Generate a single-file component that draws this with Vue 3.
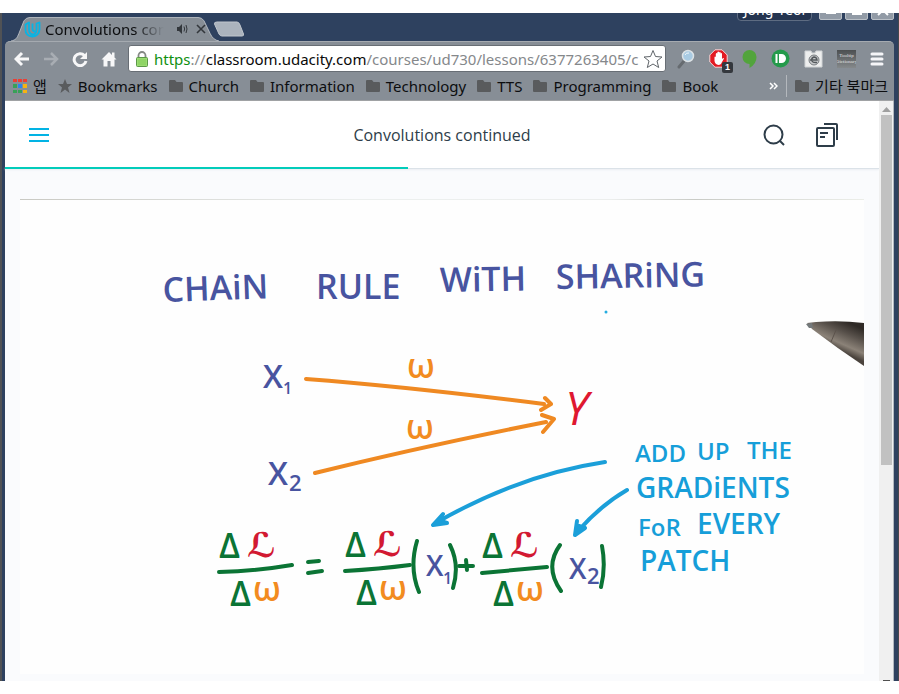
<script setup>
import { ref } from 'vue'

const address = ref('')
const progress = 46.1
const bookmarks = ['Church', 'Information', 'Technology', 'TTS', 'Programming', 'Book']

const titleWords = [
  { t: 'CHAiN', x: 163, y: 302, r: -2 },
  { t: 'RULE', x: 316, y: 299, r: 0 },
  { t: 'WiTH', x: 440, y: 292, r: -1 },
  { t: 'SHARiNG', x: 556, y: 289, r: -1 },
]
const noteWords = [
  { t: 'ADD', x: 635, y: 462, c: 'note' },
  { t: 'UP', x: 697, y: 460, c: 'note' },
  { t: 'THE', x: 747, y: 459, c: 'note' },
  { t: 'GRADiENTS', x: 636, y: 498, c: 'note wide' },
  { t: 'FoR', x: 638, y: 536, c: 'note' },
  { t: 'EVERY', x: 697, y: 534, c: 'note wide' },
  { t: 'PATCH', x: 640, y: 571, c: 'note wide' },
]
const fractions = [
  { x: 219, y: 0, bar: 'M0 572Q38 571 73 565' },
  { x: 345, y: -1, bar: 'M0 572Q34 570 65 566' },
  { x: 482, y: 0, bar: 'M0 573Q34 570 65 567' },
]
</script>

<template>
  <div class="window">
    <div class="strip">
      <div class="tab">
        <svg class="tab-shape" viewBox="0 0 208 25" preserveAspectRatio="none" aria-hidden="true">
          <path d="M0 25C5 24 6 22 8 17L13 4Q15 .5 19 .5H187Q191 .5 193 4L199 17Q202 24 208 25Z" fill="#878e96" />
          <path d="M0 25C5 24 6 22 8 17L13 4Q15 .5 19 .5H187Q191 .5 193 4L199 17Q202 24 208 25" fill="none" stroke="#b3b8bf" />
        </svg>
        <div class="tab-body">
          <svg width="17" height="17" viewBox="0 0 17 17" aria-hidden="true">
            <path d="M1.500 3.500 5 1.500V8Q5 13.500 9 13.500Q12.500 13 12.500 8V2.500L15.500 1.500V8.500Q15 15 8.500 15.500Q1.500 15 1.500 9Z" fill="none" stroke="#08b4e4" stroke-width="1.800" stroke-linejoin="round" />
            <path d="M8.500 2.500V8Q8.500 10.500 11.500 10.500" fill="none" stroke="#08b4e4" stroke-width="1.800" />
          </svg>
          <span class="tab-title">Convolutions continued</span>
          <svg width="12" height="12" viewBox="0 0 12 12" aria-hidden="true">
            <path d="M1 4H3L6 1V11L3 8H1Z" fill="#33373c" />
            <path d="M8 3.500Q9.300 6 8 8.500M10 2Q12 6 10 10" fill="none" stroke="#33373c" />
          </svg>
          <button class="plain" aria-label="Close tab">
            <svg width="10" height="10" viewBox="0 0 10 10"><path d="M1 1 9 9M9 1 1 9" stroke="#33373c" stroke-width="1.600" /></svg>
          </button>
        </div>
      </div>
      <button class="plain new-tab" aria-label="New tab">
        <svg width="32" height="16" viewBox="0 0 32 16">
          <path d="M4 1H24Q26 1 27 4L30.500 13Q31 15 29 15H9Q7 15 6 13L1.500 3Q1 1 4 1Z" fill="#abb3bd" stroke="#c0c6cd" />
        </svg>
      </button>
      <div class="window-controls">
        <button class="profile">Jong-Yeol</button>
        <button class="control" aria-label="Minimize"><svg width="12" height="12"><path d="M1 9H11" stroke="#fff" stroke-width="2" /></svg></button>
        <button class="control" aria-label="Maximize"><svg width="12" height="12"><path d="M2 1H10V10H2Z" fill="none" stroke="#fff" stroke-width="2" /></svg></button>
        <button class="control" aria-label="Close"><svg width="12" height="12"><path d="M1 1 11 11M11 1 1 11" stroke="#fff" stroke-width="2" /></svg></button>
      </div>
    </div>

    <div class="chrome">
      <div class="toolbar">
        <div class="nav">
          <button class="plain" aria-label="Back"><svg width="16" height="16" viewBox="0 0 16 16"><path d="M8 2 2 8 8 14M2.500 8H15" fill="none" stroke="#f7f7f8" stroke-width="3" /></svg></button>
          <button class="plain" aria-label="Forward"><svg width="16" height="16" viewBox="0 0 16 16"><path d="M8 2 14 8 8 14M13.500 8H1" fill="none" stroke="#a8adb3" stroke-width="2.500" /></svg></button>
          <button class="plain" aria-label="Reload"><svg width="16" height="16" viewBox="0 0 16 16"><path d="M12.500 4.500A6 6 0 1 0 14 10" fill="none" stroke="#f7f7f8" stroke-width="3" /><path d="M15 1V8H8Z" fill="#f7f7f8" /></svg></button>
          <button class="plain" aria-label="Home"><svg width="16" height="16" viewBox="0 0 16 16"><path d="M8 1 11 4V1.500H13.500V6.500L15.500 8.500H13.500V15.500H9.500V10H6.500V15.500H2.500V8.500H.5Z" fill="#f7f7f8" /></svg></button>
        </div>
        <div class="address">
          <svg width="12" height="16" viewBox="0 0 12 16" aria-hidden="true">
            <path d="M2.500 7V4.500A3.500 3.500 0 0 1 9.500 4.500V7" fill="none" stroke="#858985" stroke-width="1.800" />
            <rect x=".5" y="6.500" width="11" height="9" rx="1" fill="#9bdc72" stroke="#5c9848" />
            <path d="M2 9H10M2 11H10M2 13H10" stroke="#82cc58" />
          </svg>
          <div class="url-field">
            <span class="url"><span class="secure">https</span><span>://</span><span class="host">classroom.udacity.com</span><span>/courses/ud730/lessons/6377263405/c</span></span>
            <input v-model="address" type="text" aria-label="Address" />
          </div>
          <button class="plain" aria-label="Bookmark this page"><svg width="20" height="20" viewBox="0 0 20 20"><path d="M10 1.500 12.500 7.500 19 8 14 12 15.700 18.500 10 15 4.300 18.500 6 12 1 8 7.500 7.500Z" fill="#fff" stroke="#60656a" /></svg></button>
        </div>
        <div class="extensions">
          <button class="plain" aria-label="Search extension"><svg width="18" height="20" viewBox="0 0 18 20"><path d="M7 12 2 18" stroke="#666b70" stroke-width="3" stroke-linecap="round" /><circle cx="11" cy="7" r="5.500" fill="#a9cbe3" stroke="#dce2e6" stroke-width="1.500" /><path d="M8 6Q9 3.500 12 4" fill="none" stroke="#eef6fb" /></svg></button>
          <button class="plain badge-host" aria-label="Content blocker, 1 blocked">
            <svg width="19" height="19" viewBox="0 0 19 19"><path d="M6 .8H13L18.200 6V13L13 18.200H6L.8 13V6Z" fill="#e31b23" stroke="#f3d8d9" /><path d="M5.500 8V12Q6 15.500 9.500 16Q12 16 13 13L15 9.500Q14.500 8.500 13 10V4.500Q12.300 3.500 11.700 4.500V3.500Q11 2.500 10 3.500V3Q9 2 8.300 3.500V4.500Q7.300 3.500 6.800 5V8Q6 7 5.500 8Z" fill="#fff" /></svg>
            <span class="badge">1</span>
          </button>
          <button class="plain" aria-label="Hangouts"><svg width="15" height="18" viewBox="0 0 15 18"><path d="M7.500 0A7 7 0 0 0 7.500 14V18Q14.500 14 14.500 7A7 7 0 0 0 7.500 0Z" fill="#52a43c" /></svg></button>
          <button class="plain" aria-label="Push notes"><svg width="19" height="19" viewBox="0 0 19 19"><circle cx="9.500" cy="9.500" r="9" fill="#249a4b" /><path d="M4.500 5H6.500V14H4.500ZM8 5H10.500A4.500 4.500 0 0 1 10.500 14H8Z" fill="#fff" /></svg></button>
          <button class="plain" aria-label="Page capture"><svg width="19" height="18" viewBox="0 0 19 18"><path d="M1 1H7L8 3H11L12 1H18V17H1Z" fill="#edeeee" stroke="#d1d4d6" /><circle cx="10" cy="10" r="5" fill="#c6c8ca" stroke="#777c80" /><path d="M6 10H13Q12.500 7 10 7Q7 8 8 11Q9 13 13 12.500" fill="none" stroke="#54595d" stroke-width="1.500" /></svg></button>
          <button class="plain tip" aria-label="Tooltip Dictionary"><span>Tooltip</span><span>Dictionary</span></button>
          <button class="plain" aria-label="Browser menu"><svg width="14" height="16" viewBox="0 0 14 16"><path d="M2 3H12M2 8H12M2 13H12" stroke="#f5f5f8" stroke-width="3" stroke-linecap="round" /></svg></button>
        </div>
      </div>

      <nav class="bookmarks" aria-label="Bookmarks">
        <a href="#">
          <svg width="14" height="14" viewBox="0 0 14 14" aria-hidden="true">
            <path d="M0 0H4V3H0ZM5 0H9V3H5ZM10 0H14V3H10Z" fill="#eb3f35" />
            <path d="M0 5H4V9H0ZM0 11H4V14H0ZM5 11H9V14H5Z" fill="#38a158" />
            <path d="M5 5H9V9H5Z" fill="#2c86ed" />
            <path d="M10 5H14V9H10ZM10 11H14V14H10Z" fill="#f5b312" />
          </svg>
          앱
        </a>
        <a href="#">
          <svg width="14" height="14" viewBox="0 0 14 14" aria-hidden="true"><path d="M7 0 9 5H14L10 8.500 11.500 14 7 10.500 2.500 14 4 8.500 0 5H5Z" fill="#595b5d" /></svg>
          Bookmarks
        </a>
        <a v-for="name in bookmarks" :key="name" href="#">
          <svg width="14" height="12" viewBox="0 0 14 12" aria-hidden="true"><path d="M0 1Q0 0 1 0H6L7.500 2H13Q14 2 14 3V11Q14 12 13 12H1Q0 12 0 11Z" fill="#595b5d" /></svg>
          {{ name }}
        </a>
        <div class="overflow">
          <button class="plain" aria-label="More bookmarks"><svg width="9" height="8" viewBox="0 0 9 8"><path d="M1 1 4 4 1 7M5 1 8 4 5 7" fill="none" stroke="#fff" stroke-width="1.500" /></svg></button>
          <a class="other" href="#">
            <svg width="14" height="12" viewBox="0 0 14 12" aria-hidden="true"><path d="M0 1Q0 0 1 0H6L7.500 2H13Q14 2 14 3V11Q14 12 13 12H1Q0 12 0 11Z" fill="#595b5d" /></svg>
            기타 북마크
          </a>
        </div>
      </nav>
    </div>

    <div class="viewport">
      <div class="page">
        <header class="lesson-bar">
          <button class="plain" aria-label="Open menu"><svg width="20" height="14" viewBox="0 0 20 14"><path d="M0 1H20M0 7H20M0 13H20" stroke="#02b3e4" stroke-width="2" /></svg></button>
          <h1>Convolutions continued</h1>
          <div class="lesson-tools">
            <button class="plain" aria-label="Search"><svg width="22" height="22" viewBox="0 0 22 22"><circle cx="10.500" cy="10.500" r="9" fill="none" stroke="#2e3d49" stroke-width="2" /><path d="M16.500 16.500 21 21" stroke="#2e3d49" stroke-width="2" /></svg></button>
            <button class="plain" aria-label="Resources"><svg width="22" height="24" viewBox="0 0 22 24"><path d="M8 1H20Q21 1 21 2V17" fill="none" stroke="#2e3d49" stroke-width="2" /><rect x="1" y="5" width="17" height="18" rx="1" fill="none" stroke="#2e3d49" stroke-width="2" /><path d="M4 10H12M4 14H9" stroke="#2e3d49" stroke-width="2" /></svg></button>
          </div>
        </header>
        <div class="progress"><div class="progress-fill" :style="{ width: progress + '%' }"></div></div>

        <main>
          <svg class="board" viewBox="20 199 844 475" role="img" aria-label="Chain rule with sharing">
            <defs>
              <linearGradient id="edge"><stop stop-color="#c9c9c3" /><stop offset=".4" stop-color="#ecefee" /><stop offset=".7" stop-color="#eceeed" /><stop offset=".8" stop-color="#c9cbc6" /><stop offset="1" stop-color="#eceee9" /></linearGradient>
              <linearGradient id="barrel" gradientUnits="userSpaceOnUse" x1="845" y1="321" x2="833" y2="348"><stop stop-color="#2f2a26" /><stop offset=".35" stop-color="#57504a" /><stop offset=".75" stop-color="#8b8278" /><stop offset="1" stop-color="#4a433d" /></linearGradient>
            </defs>
            <rect x="20" y="199" width="844" height="475" fill="#fefefe" />
            <rect x="20" y="199" width="844" height="1" fill="url(#edge)" />

            <text v-for="w in titleWords" :key="w.t" class="title" :x="w.x" :y="w.y" :transform="`rotate(${w.r} ${w.x} ${w.y})`">{{ w.t }}</text>
            <circle cx="606" cy="312" r="1.500" fill="#24ace0" />

            <g class="ink">
              <text class="variable" x="263" y="388">X</text><text class="index" x="283" y="394">1</text>
              <text class="variable" x="268" y="485">X</text><text class="sub" x="289" y="491">2</text>
            </g>
            <g class="omega"><text x="407" y="378">ω</text><text x="406" y="439">ω</text></g>
            <text class="output" x="565" y="425">Y</text>

            <g class="stroke orange">
              <path d="M306 379Q410 387 544 404M545 398 551 404 541 410" />
              <path d="M315 473Q420 447 546 422M542 415 554 419 543 432" />
            </g>
            <g class="stroke blue">
              <path d="M605 462Q518 475 434 524M443 514 433 525 447 523 438 520" />
              <path d="M627 490Q601 505 578 531M577 521 575 535 585 528 579 526" />
            </g>

            <g v-for="f in fractions" :key="f.x" :transform="`translate(${f.x} ${f.y})`">
              <text class="delta" x="0" y="558">Δ</text>
              <text class="loss" x="28" y="557">ℒ</text>
              <path class="stroke green" :d="f.bar" />
              <text class="delta" x="11" y="606">Δ</text>
              <text class="omega" x="34" y="601">ω</text>
            </g>
            <path class="stroke green" d="M308 562 319 561M308 573 322 571M459 566H473M466 560 467 570" />
            <path class="stroke green" d="M417 541Q409 568 419 592M450 545Q460 565 453 588M560 545Q544 567 561 591M602 546Q606 567 601 587" />
            <g class="ink">
              <text class="term" x="426" y="576">X</text><text class="index" x="443" y="584">1</text>
              <text class="term" x="569" y="579">X</text><text class="sub" x="587" y="584">2</text>
            </g>

            <text v-for="w in noteWords" :key="w.t" :class="w.c" :x="w.x" :y="w.y">{{ w.t }}</text>

            <path d="M807 323 816 322Q840 320 864 323V366Q837 348 812 329Z" fill="url(#barrel)" />
            <path d="M806 324 812 323 813 328 809 328Z" fill="#74797b" />
            <path d="M831 342 836 330" stroke="#5c534c" stroke-width="1" />
          </svg>
        </main>
      </div>
      <div class="scrollbar" aria-hidden="true">
        <svg width="9" height="5" viewBox="0 0 9 5"><path d="M0 5 4.500 0 9 5Z" fill="#a0a0a0" /></svg>
        <div class="thumb"></div>
        <div class="scroll-end"></div>
      </div>
    </div>
  </div>
</template>

<style>
body { margin: 0; background: #fff; }
</style>

<style scoped>
* { box-sizing: border-box; }
.window {
  margin-top: 13px;
  padding: 0 4px 0 3px;
  border-left: 2px solid #505255;
  border-right: 1px solid #46494d;
  background: #2e415f;
  font-family: "Noto Sans", "Noto Sans CJK KR", sans-serif;
  color: #0c0d0f;
  overflow: hidden;
}
.plain {
  display: inline-flex;
  align-items: center;
  justify-content: center;
  padding: 0;
  border: 0;
  background: none;
  color: inherit;
  font: inherit;
}
svg { display: block; flex: none; }
.strip { display: flex; height: 28px; }
.tab { display: grid; grid-template-columns: minmax(0, 1fr); width: 208px; margin: 4px 0 0 6px; }
.tab-shape { grid-area: 1 / 1; width: 100%; height: 24px; }
.tab-body { grid-area: 1 / 1; display: flex; align-items: center; gap: 4px; min-width: 0; height: 24px; padding: 0 17px 0 13px; }
.tab-title {
  flex: 1;
  min-width: 0;
  margin-right: 8px;
  overflow: hidden;
  white-space: nowrap;
  font-size: 15px;
  line-height: 24px;
  mask-image: linear-gradient(90deg, #000 75%, transparent);
}
.tab-body > .plain { margin-left: 4px; margin-right: -4px; }
.new-tab { height: 16px; margin: 8px 0 0 -6px; }
.window-controls { display: flex; align-items: flex-start; gap: 3px; margin: -14px 0 0 auto; }
.profile {
  height: 22px;
  margin-right: 4px;
  padding: 0 6px;
  border: 1px solid #5e6c82;
  border-radius: 4px;
  background: #24344f;
  color: #fff;
  font: 14px/18px "Noto Sans", sans-serif;
}
.control { display: grid; place-items: center; width: 23px; height: 21px; padding: 0; border: 1px solid #bac0c7; border-radius: 2px; background: #929ba6; }
.chrome {
  border-top: 1px solid #a5aab0;
  border-bottom: 1px solid #a0a2a4;
  border-radius: 5px 5px 0 0;
  background: #878e96;
}
.toolbar { display: flex; align-items: center; gap: 11px; height: 33px; padding: 0 10px 0 9px; }
.nav { display: flex; gap: 13px; }
.address {
  display: flex;
  flex: 1;
  align-items: center;
  gap: 6px;
  min-width: 0;
  height: 27px;
  padding: 0 2px 0 7px;
  border: 1px solid #686e75;
  border-radius: 3px;
  background: #fff;
}
.address > .plain { margin-left: -6px; }
.url-field { display: grid; grid-template-columns: minmax(0, 1fr); flex: 1; min-width: 0; }
.url { grid-area: 1 / 1; overflow: hidden; white-space: nowrap; font-size: 15px; line-height: 24px; color: #85888b; }
.secure { color: #109010; }
.host { color: #090909; }
.url-field input { grid-area: 1 / 1; width: 100%; min-width: 0; padding: 0; border: 0; background: transparent; font: inherit; outline: none; }
.extensions { display: flex; align-items: center; gap: 14px; }
.badge-host { position: relative; }
.badge {
  position: absolute;
  right: -5px;
  bottom: -5px;
  width: 11px;
  height: 11px;
  border-radius: 2px;
  background: #34383d;
  color: #fff;
  font: bold 9px/11px "Liberation Sans", sans-serif;
}
.tip {
  flex-direction: column;
  width: 19px;
  height: 18px;
  overflow: hidden;
  background: linear-gradient(#4c4f51, #85898b);
  color: #e0e1e2;
  font: 5px/6px "Liberation Serif", serif;
}
.bookmarks { display: flex; align-items: flex-start; gap: 11px; height: 25px; padding: 0 6px 0 8px; font-size: 15px; line-height: 22px; white-space: nowrap; }
.bookmarks a { display: flex; align-items: center; gap: 6px; height: 22px; color: inherit; text-decoration: none; }
.overflow { display: flex; align-items: center; gap: 8px; margin-left: auto; }
.bookmarks .other { padding-left: 8px; border-left: 1px solid #b4b8bd; }
.viewport { display: flex; background: #fff; }
.page { flex: 1; min-width: 0; background: #fafbfd; }
.lesson-bar { display: grid; grid-template-columns: 1fr auto 1fr; align-items: center; height: 66px; padding: 2px 41px 0 24px; background: #fff; }
.lesson-bar > .plain { justify-self: start; }
h1 { margin: 0; padding-left: 17px; color: #2e3d49; font: 400 16px/24px "Open Sans", sans-serif; }
.lesson-tools { display: flex; justify-content: flex-end; align-items: center; gap: 31px; }
.progress { height: 2px; background: linear-gradient(#fff 50%, #dbe2e8 50%); box-shadow: 0 1px 2px #e9edf1; }
.progress-fill { height: 2px; background: #02ccba; }
main { padding: 30px 15px 7px; }
.board { width: 100%; height: auto; }
.scrollbar { display: flex; flex-direction: column; align-items: center; width: 15px; padding-top: 6px; border-right: 1px solid #b1b7be; background: #f0f0f0; }
.thumb { width: 11px; height: 61%; margin-top: 3px; background: #c1c1c1; }
.scroll-end { width: 7px; height: 1px; margin-top: auto; background: #505050; }

.board text { font-family: "Open Sans", sans-serif; font-weight: 600; font-size: 34px; }
.board .title { fill: #4854a0; }
.ink { fill: #4854a0; }
.board .variable { font-size: 32px; }
.board .term { font-size: 28px; }
.board .index { font-size: 16px; }
.board .sub { font-size: 22px; }
.omega { fill: #f28b20; }
.board .output { fill: #df1830; font-size: 46px; font-style: italic; font-weight: 400; }
.delta { fill: #0b7435; }
.board .loss { fill: #d21932; font-family: "DejaVu Sans", sans-serif; }
.board .note { fill: #169ed9; font-size: 24px; }
.board .wide { font-size: 28px; }
.stroke { fill: none; stroke-width: 4; stroke-linecap: round; stroke-linejoin: round; }
.orange { stroke: #ef8922; }
.blue { stroke: #1b9fd9; }
.green { stroke: #0b7435; }
</style>
